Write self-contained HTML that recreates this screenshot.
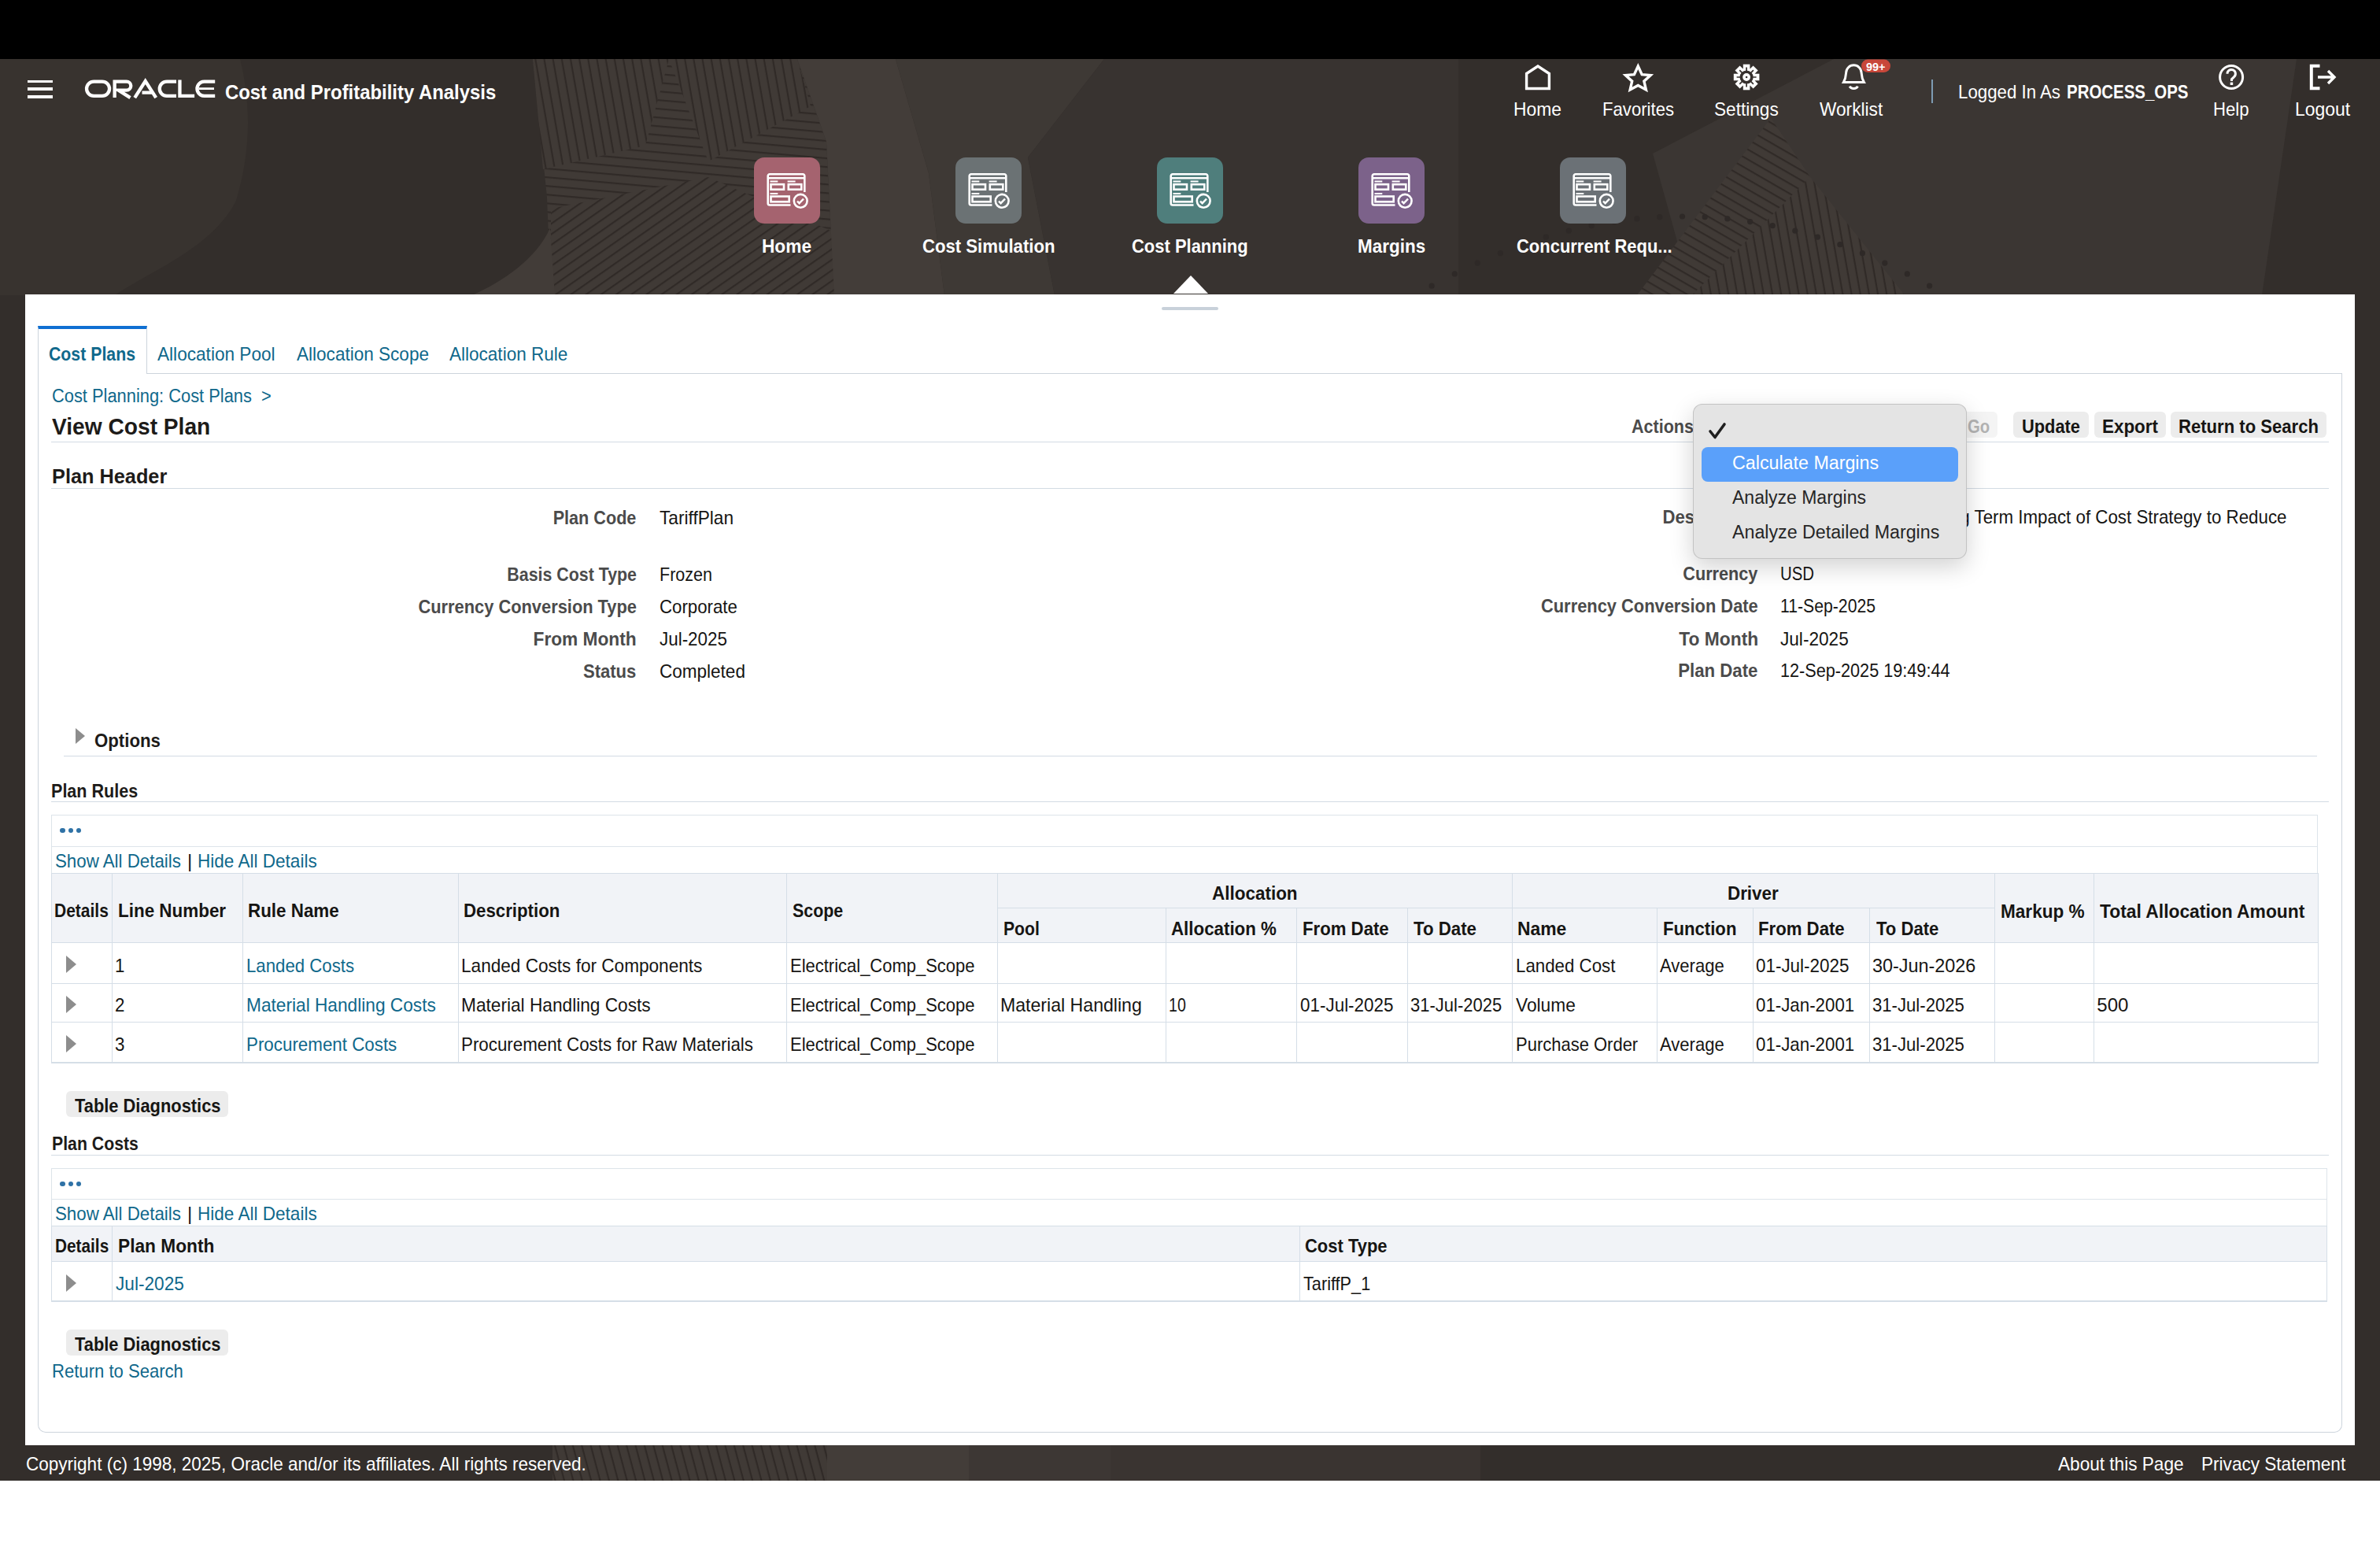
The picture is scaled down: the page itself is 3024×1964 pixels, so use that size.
<!DOCTYPE html><html><head><meta charset="utf-8"><style>
html,body{margin:0;padding:0;width:3024px;height:1964px;overflow:hidden;background:#fff;position:relative;font-family:"Liberation Sans",sans-serif;}
.t{position:absolute;white-space:pre;line-height:1;}

.tile{position:absolute;width:84px;height:84px;border-radius:13px;}
.tri{position:absolute;width:0;height:0;border-top:11px solid transparent;border-bottom:11px solid transparent;border-left:13px solid #8d8d8d;}
.btn{position:absolute;background:#ececec;border-radius:6px;}

</style></head><body>
<div style="position:absolute;left:0px;top:0px;width:3024px;height:75px;background:#000;"></div>
<div style="position:absolute;left:0px;top:75px;width:3024px;height:1806px;background:#332e2b;"></div>
<svg style="position:absolute;left:0;top:75px" width="3024" height="300" viewBox="0 0 3024 300">
<defs>
<pattern id="h1" width="11" height="11" patternUnits="userSpaceOnUse" patternTransform="rotate(80)"><rect width="11" height="11" fill="#403a36"/><rect width="11" height="2.2" fill="#302a27"/></pattern>
<pattern id="h2" width="11" height="11" patternUnits="userSpaceOnUse" patternTransform="rotate(5)"><rect width="11" height="11" fill="#403a36"/><rect width="11" height="2.2" fill="#302a27"/></pattern>
<pattern id="h3" width="11" height="11" patternUnits="userSpaceOnUse" patternTransform="rotate(-35)"><rect width="11" height="11" fill="#403a36"/><rect width="11" height="2.2" fill="#302a27"/></pattern>
<pattern id="h4" width="11" height="11" patternUnits="userSpaceOnUse" patternTransform="rotate(30)"><rect width="11" height="11" fill="#403a36"/><rect width="11" height="2.2" fill="#302a27"/></pattern>
</defs>
<path d="M677 0 L1013 0 L1050 105 L1060 300 L700 300 L695 175 Z" fill="url(#h2)"/>
<path d="M677 0 L850 0 L820 110 L690 140 Z" fill="url(#h1)"/>
<path d="M850 0 L1013 0 L1030 60 L900 130 Z" fill="url(#h1)"/>
<path d="M700 190 L900 150 L1060 220 L1060 300 L700 300 Z" fill="url(#h3)"/>
<path d="M0 0 L305 0 C320 60 318 120 300 180 C270 240 190 270 146 300 L0 300 Z" fill="#38332f"/>
<path d="M699 215 C680 255 640 282 600 300 L705 300 Z" fill="#423c38"/>

<path d="M1013 0 L1138 0 L1180 145 L1200 300 L1060 300 L1050 105 Z" fill="#433d39"/>
<path d="M1138 0 L1403 0 L1306 125 L1340 300 L1200 300 L1180 145 Z" fill="#3e3935"/>
<path d="M1403 0 L1853 0 L1853 300 L1340 300 L1306 125 Z" fill="#383330"/>
<path d="M2150 300 L2100 120 L2330 0 L2918 0 L2874 300 Z" fill="#3b3633"/>
<path d="M2080 300 L2250 75 L2300 150 L2150 300 Z" fill="url(#h4)"/>
<path d="M2150 300 L2300 150 L2420 300 Z" fill="url(#h1)"/>


<circle cx="1819.1" cy="288.2" r="3.6" fill="#2e2927"/>
<circle cx="1848.3" cy="272.9" r="3.6" fill="#2e2927"/>
<circle cx="1877.3" cy="259.1" r="3.6" fill="#2e2927"/>
<circle cx="1906.4" cy="246.7" r="3.6" fill="#2e2927"/>
<circle cx="1935.4" cy="235.7" r="3.6" fill="#2e2927"/>
<circle cx="1964.4" cy="226.2" r="3.6" fill="#2e2927"/>
<circle cx="1993.3" cy="218.2" r="3.6" fill="#2e2927"/>
<circle cx="2022.2" cy="211.7" r="3.6" fill="#2e2927"/>
<circle cx="2051.1" cy="206.6" r="3.6" fill="#2e2927"/>
<circle cx="2079.9" cy="202.9" r="3.6" fill="#2e2927"/>
<circle cx="2108.7" cy="200.7" r="3.6" fill="#2e2927"/>
<circle cx="2137.5" cy="200.0" r="3.6" fill="#2e2927"/>
<circle cx="2166.2" cy="200.7" r="3.6" fill="#2e2927"/>
<circle cx="2194.9" cy="202.9" r="3.6" fill="#2e2927"/>
<circle cx="2223.6" cy="206.6" r="3.6" fill="#2e2927"/>
<circle cx="2252.2" cy="211.7" r="3.6" fill="#2e2927"/>
<circle cx="2280.8" cy="218.2" r="3.6" fill="#2e2927"/>
<circle cx="2309.4" cy="226.2" r="3.6" fill="#2e2927"/>
<circle cx="2337.9" cy="235.7" r="3.6" fill="#2e2927"/>
<circle cx="2366.4" cy="246.7" r="3.6" fill="#2e2927"/>
<circle cx="2394.8" cy="259.1" r="3.6" fill="#2e2927"/>
<circle cx="2423.3" cy="272.9" r="3.6" fill="#2e2927"/>
<circle cx="2451.6" cy="288.2" r="3.6" fill="#2e2927"/>
</svg>
<div style="position:absolute;left:32px;top:374px;width:2960px;height:1462px;background:#fff;"></div>
<div style="position:absolute;left:48px;top:474px;width:2928px;height:1346px;border:1px solid #cdd4dc;border-top:none;border-radius:0 0 10px 10px;box-sizing:border-box;"></div>
<div style="position:absolute;left:186px;top:474px;width:2790px;height:1px;background:#cdd4dc;"></div>
<div style="position:absolute;left:48px;top:414px;width:139px;height:61px;border:1px solid #cdd4dc;border-top:4px solid #0f6fd2;border-bottom:none;box-sizing:border-box;background:#fff"></div>
<div style="position:absolute;left:35px;top:101.75px;width:32px;height:3.5px;background:#fff;"></div>
<div style="position:absolute;left:35px;top:111.25px;width:32px;height:3.5px;background:#fff;"></div>
<div style="position:absolute;left:35px;top:121.25px;width:32px;height:3.5px;background:#fff;"></div>
<svg style="position:absolute;left:0;top:0" width="300" height="140" viewBox="0 0 300 140">
<g fill="none" stroke="#fff" stroke-width="4.3">
<rect x="110.05" y="103.55" width="29" height="18.4" rx="9.2"/>
<path d="M145.65 124.1 V103.55 H160.75 a5.55 5.55 0 0 1 0 11.1 H150.5 L165.5 124.1"/>
<path d="M171.2 124.1 L184.7 103 L198.2 124.1 M180.5 117.6 H194"/>
<path d="M224 103.55 H211.95 a9.2 9.2 0 0 0 0 18.4 H224"/>
<path d="M228.45 101.4 V121.95 H247.1"/>
<path d="M273.2 103.55 H259.65 a9.2 9.2 0 0 0 0 18.4 H273.2"/>
<path d="M252.5 112.6 H272" stroke-width="2.8"/>
</g></svg>
<svg style="position:absolute;left:0;top:0" width="3024" height="200" viewBox="0 0 3024 200">
<g fill="none" stroke="#fff" stroke-width="3.4" stroke-linejoin="miter">
<path d="M1939.6 112.5 V93.5 L1954 84 L1968.4 93.5 V112.5 Z"/>
<path d="M2081.3 84 L2086.2 94.6 L2097.2 95.6 L2088.9 103.2 L2091.4 114 L2081.3 108.4 L2071.2 114 L2073.7 103.2 L2065.4 95.6 L2076.4 94.6 Z"/>
<circle cx="2835.1" cy="98" r="14.5" stroke-width="3"/>
<path d="M2947.5 83.8 H2936.8 V112.3 H2947.5" stroke-width="4"/>
<path d="M2945 98 H2966 M2958 90 L2966 98 L2958 106" stroke-width="3.4"/>
<path d="M2342.4 104.6 H2368.4 C2366.4 101 2365.4 97 2365.1 92.6 A9.75 9.75 0 0 0 2345.6 92.6 C2345.3 97 2344.4 101 2342.4 104.6 Z" stroke-width="3"/>
<path d="M2350.2 109.6 A5.5 4.6 0 0 0 2360.4 109.6" stroke-width="3"/>
<path d="M2830 93.8 A5.2 5.2 0 1 1 2838.6 97.6 L2835.5 100.6 V103" stroke-width="3"/>
</g>
<rect x="2833.7" y="104.6" width="3.5" height="3.4" fill="#fff"/>
<g transform="translate(2219.1,98)">
<g fill="#fff"><circle r="11.3"/><rect x="-4.3" y="-16.3" width="8.6" height="8" transform="rotate(0)"/><rect x="-4.3" y="-16.3" width="8.6" height="8" transform="rotate(45)"/><rect x="-4.3" y="-16.3" width="8.6" height="8" transform="rotate(90)"/><rect x="-4.3" y="-16.3" width="8.6" height="8" transform="rotate(135)"/><rect x="-4.3" y="-16.3" width="8.6" height="8" transform="rotate(180)"/><rect x="-4.3" y="-16.3" width="8.6" height="8" transform="rotate(225)"/><rect x="-4.3" y="-16.3" width="8.6" height="8" transform="rotate(270)"/><rect x="-4.3" y="-16.3" width="8.6" height="8" transform="rotate(315)"/></g>
<circle r="6.75" fill="none" stroke="#36302d" stroke-width="3.7"/>
<circle r="1.3" fill="#36302d"/>
<g stroke="#36302d" stroke-width="1.7">
<path d="M0 -8 V-12.5 M0 8 V12.5 M-8 0 H-12.5 M8 0 H12.5 M5.7 -5.7 L8.8 -8.8 M-5.7 -5.7 L-8.8 -8.8 M5.7 5.7 L8.8 8.8 M-5.7 5.7 L-8.8 8.8"/>
</g>
</g>
<rect x="2365" y="75.5" width="37" height="16.5" rx="8.2" fill="#c8473a"/>
<rect x="2454" y="101" width="2" height="30" fill="#7d9bb3"/>
</svg>
<div class="tile" style="left:958px;top:200px;background:#a5636f"><svg width="84" height="84" viewBox="0 0 84 84" style="position:absolute;left:0;top:0"><g fill="none" stroke="#fff" stroke-width="2.6">
<path d="M46.5 60.5 H20 a2.3 2.3 0 0 1 -2.3 -2.3 V23.5 a2.3 2.3 0 0 1 2.3 -2.3 H62 a2.3 2.3 0 0 1 2.3 2.3 V44"/>
<path d="M17.7 26.2 H64.3"/>
<rect x="21.5" y="34.2" width="16.5" height="6.5"/>
<rect x="43.8" y="34.2" width="16.5" height="6.5"/>
<rect x="21.5" y="49.5" width="23.2" height="6.8"/>
<circle cx="59.2" cy="55.3" r="8.4"/>
<path d="M55 55.6 L57.6 58.2 L63 52.6" stroke-width="2.4"/>
</g><g fill="#fff"><rect x="20.5" y="29.5" width="9.8" height="2"/><rect x="42.6" y="29.5" width="10" height="2"/><rect x="20.5" y="45" width="9.8" height="2"/></g></svg></div>
<div class="tile" style="left:1214px;top:200px;background:#6b7274"><svg width="84" height="84" viewBox="0 0 84 84" style="position:absolute;left:0;top:0"><g fill="none" stroke="#fff" stroke-width="2.6">
<path d="M46.5 60.5 H20 a2.3 2.3 0 0 1 -2.3 -2.3 V23.5 a2.3 2.3 0 0 1 2.3 -2.3 H62 a2.3 2.3 0 0 1 2.3 2.3 V44"/>
<path d="M17.7 26.2 H64.3"/>
<rect x="21.5" y="34.2" width="16.5" height="6.5"/>
<rect x="43.8" y="34.2" width="16.5" height="6.5"/>
<rect x="21.5" y="49.5" width="23.2" height="6.8"/>
<circle cx="59.2" cy="55.3" r="8.4"/>
<path d="M55 55.6 L57.6 58.2 L63 52.6" stroke-width="2.4"/>
</g><g fill="#fff"><rect x="20.5" y="29.5" width="9.8" height="2"/><rect x="42.6" y="29.5" width="10" height="2"/><rect x="20.5" y="45" width="9.8" height="2"/></g></svg></div>
<div class="tile" style="left:1470px;top:200px;background:#4f7e7c"><svg width="84" height="84" viewBox="0 0 84 84" style="position:absolute;left:0;top:0"><g fill="none" stroke="#fff" stroke-width="2.6">
<path d="M46.5 60.5 H20 a2.3 2.3 0 0 1 -2.3 -2.3 V23.5 a2.3 2.3 0 0 1 2.3 -2.3 H62 a2.3 2.3 0 0 1 2.3 2.3 V44"/>
<path d="M17.7 26.2 H64.3"/>
<rect x="21.5" y="34.2" width="16.5" height="6.5"/>
<rect x="43.8" y="34.2" width="16.5" height="6.5"/>
<rect x="21.5" y="49.5" width="23.2" height="6.8"/>
<circle cx="59.2" cy="55.3" r="8.4"/>
<path d="M55 55.6 L57.6 58.2 L63 52.6" stroke-width="2.4"/>
</g><g fill="#fff"><rect x="20.5" y="29.5" width="9.8" height="2"/><rect x="42.6" y="29.5" width="10" height="2"/><rect x="20.5" y="45" width="9.8" height="2"/></g></svg></div>
<div class="tile" style="left:1726px;top:200px;background:#7c628a"><svg width="84" height="84" viewBox="0 0 84 84" style="position:absolute;left:0;top:0"><g fill="none" stroke="#fff" stroke-width="2.6">
<path d="M46.5 60.5 H20 a2.3 2.3 0 0 1 -2.3 -2.3 V23.5 a2.3 2.3 0 0 1 2.3 -2.3 H62 a2.3 2.3 0 0 1 2.3 2.3 V44"/>
<path d="M17.7 26.2 H64.3"/>
<rect x="21.5" y="34.2" width="16.5" height="6.5"/>
<rect x="43.8" y="34.2" width="16.5" height="6.5"/>
<rect x="21.5" y="49.5" width="23.2" height="6.8"/>
<circle cx="59.2" cy="55.3" r="8.4"/>
<path d="M55 55.6 L57.6 58.2 L63 52.6" stroke-width="2.4"/>
</g><g fill="#fff"><rect x="20.5" y="29.5" width="9.8" height="2"/><rect x="42.6" y="29.5" width="10" height="2"/><rect x="20.5" y="45" width="9.8" height="2"/></g></svg></div>
<div class="tile" style="left:1982px;top:200px;background:#6b7176"><svg width="84" height="84" viewBox="0 0 84 84" style="position:absolute;left:0;top:0"><g fill="none" stroke="#fff" stroke-width="2.6">
<path d="M46.5 60.5 H20 a2.3 2.3 0 0 1 -2.3 -2.3 V23.5 a2.3 2.3 0 0 1 2.3 -2.3 H62 a2.3 2.3 0 0 1 2.3 2.3 V44"/>
<path d="M17.7 26.2 H64.3"/>
<rect x="21.5" y="34.2" width="16.5" height="6.5"/>
<rect x="43.8" y="34.2" width="16.5" height="6.5"/>
<rect x="21.5" y="49.5" width="23.2" height="6.8"/>
<circle cx="59.2" cy="55.3" r="8.4"/>
<path d="M55 55.6 L57.6 58.2 L63 52.6" stroke-width="2.4"/>
</g><g fill="#fff"><rect x="20.5" y="29.5" width="9.8" height="2"/><rect x="42.6" y="29.5" width="10" height="2"/><rect x="20.5" y="45" width="9.8" height="2"/></g></svg></div>
<div style="position:absolute;left:1491px;top:350px;width:0;height:0;border-left:22px solid transparent;border-right:22px solid transparent;border-bottom:23px solid #fff"></div>
<div style="position:absolute;left:1476px;top:390px;width:72px;height:4px;background:#c8d1da;border-radius:2px;"></div>
<div style="position:absolute;left:65px;top:561px;width:2894px;height:1px;background:#d3dbe3;"></div>
<div style="position:absolute;left:65px;top:620px;width:2894px;height:1px;background:#d3dbe3;"></div>
<div class="btn" style="left:2476px;top:523px;width:62px;height:33px;background:#f4f4f4"></div>
<div class="btn" style="left:2558px;top:523px;width:96px;height:33px"></div>
<div class="btn" style="left:2661px;top:523px;width:90.69999999999982px;height:33px"></div>
<div class="btn" style="left:2758px;top:523px;width:198px;height:33px"></div>
<div class="tri" style="left:96px;top:924.5px;border-top-width:10.7px;border-bottom-width:10.7px;border-left-width:12.5px"></div>
<div style="position:absolute;left:81px;top:960px;width:2863px;height:1px;background:#d3dbe3;"></div>
<div style="position:absolute;left:65px;top:1018px;width:2894px;height:1px;background:#d3dbe3;"></div>
<div style="position:absolute;left:65px;top:1035px;width:2880px;height:75px;border:1px solid #dde4ea;border-bottom:none;box-sizing:border-box"></div>
<div style="position:absolute;left:65px;top:1075px;width:2879px;height:1px;background:#dde4ea;"></div>
<div style="position:absolute;left:76.3px;top:1051.8px;width:6.4px;height:6.4px;border-radius:50%;background:#2f72a6"></div>
<div style="position:absolute;left:86.6px;top:1051.8px;width:6.4px;height:6.4px;border-radius:50%;background:#2f72a6"></div>
<div style="position:absolute;left:96.8px;top:1051.8px;width:6.4px;height:6.4px;border-radius:50%;background:#2f72a6"></div>
<div style="position:absolute;left:65.2px;top:1109.4px;width:2880.1000000000004px;height:88.09999999999991px;background:#f1f3f7;"></div>
<div style="position:absolute;left:65px;top:1109px;width:2881px;height:1px;background:#d5dee7;"></div>
<div style="position:absolute;left:65px;top:1197px;width:2881px;height:1px;background:#d5dee7;"></div>
<div style="position:absolute;left:65px;top:1249px;width:2881px;height:1px;background:#d5dee7;"></div>
<div style="position:absolute;left:65px;top:1298px;width:2881px;height:1px;background:#d5dee7;"></div>
<div style="position:absolute;left:65px;top:1349px;width:2881px;height:2px;background:#d5dee7;"></div>
<div style="position:absolute;left:1267px;top:1153px;width:1268px;height:1px;background:#d5dee7;"></div>
<div style="position:absolute;left:65px;top:1109px;width:1px;height:241px;background:#d5dee7;"></div>
<div style="position:absolute;left:142px;top:1109px;width:1px;height:241px;background:#d5dee7;"></div>
<div style="position:absolute;left:308px;top:1109px;width:1px;height:241px;background:#d5dee7;"></div>
<div style="position:absolute;left:582px;top:1109px;width:1px;height:241px;background:#d5dee7;"></div>
<div style="position:absolute;left:999px;top:1109px;width:1px;height:241px;background:#d5dee7;"></div>
<div style="position:absolute;left:1267px;top:1109px;width:1px;height:241px;background:#d5dee7;"></div>
<div style="position:absolute;left:1481px;top:1153px;width:1px;height:197px;background:#d5dee7;"></div>
<div style="position:absolute;left:1647px;top:1153px;width:1px;height:197px;background:#d5dee7;"></div>
<div style="position:absolute;left:1788px;top:1153px;width:1px;height:197px;background:#d5dee7;"></div>
<div style="position:absolute;left:1921px;top:1109px;width:1px;height:241px;background:#d5dee7;"></div>
<div style="position:absolute;left:2105px;top:1153px;width:1px;height:197px;background:#d5dee7;"></div>
<div style="position:absolute;left:2227px;top:1153px;width:1px;height:197px;background:#d5dee7;"></div>
<div style="position:absolute;left:2375px;top:1153px;width:1px;height:197px;background:#d5dee7;"></div>
<div style="position:absolute;left:2534px;top:1109px;width:1px;height:241px;background:#d5dee7;"></div>
<div style="position:absolute;left:2660px;top:1109px;width:1px;height:241px;background:#d5dee7;"></div>
<div style="position:absolute;left:2945px;top:1109px;width:1px;height:241px;background:#d5dee7;"></div>
<div class="tri" style="left:84px;top:1213.9px"></div>
<div class="tri" style="left:84px;top:1264.5px"></div>
<div class="tri" style="left:84px;top:1314.5px"></div>
<div class="btn" style="left:84px;top:1386px;width:206px;height:33px"></div>
<div style="position:absolute;left:65px;top:1467px;width:2894px;height:1px;background:#d3dbe3;"></div>
<div style="position:absolute;left:65px;top:1484px;width:2892px;height:74px;border:1px solid #dde4ea;border-bottom:none;box-sizing:border-box"></div>
<div style="position:absolute;left:65px;top:1523px;width:2892px;height:1px;background:#dde4ea;"></div>
<div style="position:absolute;left:76.3px;top:1500.5px;width:6.4px;height:6.4px;border-radius:50%;background:#2f72a6"></div>
<div style="position:absolute;left:86.6px;top:1500.5px;width:6.4px;height:6.4px;border-radius:50%;background:#2f72a6"></div>
<div style="position:absolute;left:96.8px;top:1500.5px;width:6.4px;height:6.4px;border-radius:50%;background:#2f72a6"></div>
<div style="position:absolute;left:65.2px;top:1557.8px;width:2891.5px;height:44.700000000000045px;background:#f1f3f7;"></div>
<div style="position:absolute;left:65px;top:1557px;width:2892px;height:1px;background:#d5dee7;"></div>
<div style="position:absolute;left:65px;top:1602px;width:2892px;height:1px;background:#d5dee7;"></div>
<div style="position:absolute;left:65px;top:1652px;width:2892px;height:2px;background:#d5dee7;"></div>
<div style="position:absolute;left:65px;top:1557px;width:1px;height:96px;background:#d5dee7;"></div>
<div style="position:absolute;left:142px;top:1557px;width:1px;height:96px;background:#d5dee7;"></div>
<div style="position:absolute;left:1651px;top:1557px;width:1px;height:96px;background:#d5dee7;"></div>
<div style="position:absolute;left:2956px;top:1557px;width:1px;height:96px;background:#d5dee7;"></div>
<div class="tri" style="left:84px;top:1618.5px"></div>
<div class="btn" style="left:84px;top:1689px;width:206px;height:33px"></div>
<svg style="position:absolute;left:0;top:1836px" width="3024" height="45" viewBox="0 0 3024 45">
<defs><pattern id="f1" width="11" height="11" patternUnits="userSpaceOnUse" patternTransform="rotate(75)"><rect width="11" height="11" fill="#403a36"/><rect width="11" height="2.2" fill="#302a27"/></pattern></defs>
<rect x="702" y="0" width="350" height="45" fill="url(#f1)"/>
<rect x="1051" y="0" width="180" height="45" fill="#433d39"/>
<rect x="1231" y="0" width="180" height="45" fill="#3d3734"/>
<rect x="1411" y="0" width="470" height="45" fill="#3a3431"/>
</svg>
<div style="position:absolute;left:0px;top:1881px;width:3024px;height:83px;background:#fff;"></div>
<span class="t" id="t0" style="left:285.60px;top:103.80px;font-size:26px;font-weight:700;color:#ffffff;transform:scaleX(0.9187);transform-origin:left;">Cost and Profitability Analysis</span>
<span class="t" id="t1" style="left:2371.00px;top:76.55px;font-size:15px;font-weight:700;color:#ffffff;transform:scaleX(0.9626);transform-origin:left;">99+</span>
<span class="t" id="t2" style="left:1923.00px;top:127.00px;font-size:24px;color:#ffffff;transform:scaleX(0.9527);transform-origin:left;">Home</span>
<span class="t" id="t3" style="left:2036.00px;top:127.00px;font-size:24px;color:#ffffff;transform:scaleX(0.9220);transform-origin:left;">Favorites</span>
<span class="t" id="t4" style="left:2178.00px;top:127.00px;font-size:24px;color:#ffffff;transform:scaleX(0.9421);transform-origin:left;">Settings</span>
<span class="t" id="t5" style="left:2311.80px;top:127.00px;font-size:24px;color:#ffffff;transform:scaleX(0.9447);transform-origin:left;">Worklist</span>
<span class="t" id="t6" style="left:2812.00px;top:126.80px;font-size:24px;color:#ffffff;transform:scaleX(0.9218);transform-origin:left;">Help</span>
<span class="t" id="t7" style="left:2916.40px;top:126.80px;font-size:24px;color:#ffffff;transform:scaleX(0.9563);transform-origin:left;">Logout</span>
<span class="t" id="t8" style="left:2488.00px;top:104.70px;font-size:24px;color:#ffffff;transform:scaleX(0.9277);transform-origin:left;">Logged In As</span>
<span class="t" id="t9" style="left:2626.00px;top:104.70px;font-size:24px;font-weight:700;color:#ffffff;transform:scaleX(0.8517);transform-origin:left;">PROCESS_OPS</span>
<span class="t" id="t10" style="left:968.00px;top:300.60px;font-size:24px;font-weight:700;color:#ffffff;transform:scaleX(0.9447);transform-origin:left;">Home</span>
<span class="t" id="t11" style="left:1171.50px;top:300.60px;font-size:24px;font-weight:700;color:#ffffff;transform:scaleX(0.9224);transform-origin:left;">Cost Simulation</span>
<span class="t" id="t12" style="left:1438.00px;top:300.60px;font-size:24px;font-weight:700;color:#ffffff;transform:scaleX(0.9148);transform-origin:left;">Cost Planning</span>
<span class="t" id="t13" style="left:1724.80px;top:300.60px;font-size:24px;font-weight:700;color:#ffffff;transform:scaleX(0.9368);transform-origin:left;">Margins</span>
<span class="t" id="t14" style="left:1927.00px;top:300.60px;font-size:24px;font-weight:700;color:#ffffff;transform:scaleX(0.9147);transform-origin:left;">Concurrent Requ...</span>
<span class="t" id="t15" style="left:62.00px;top:438.30px;font-size:24px;font-weight:700;color:#0f688b;transform:scaleX(0.8869);transform-origin:left;">Cost Plans</span>
<span class="t" id="t16" style="left:200.00px;top:438.30px;font-size:24px;color:#0f688b;transform:scaleX(0.9423);transform-origin:left;">Allocation Pool</span>
<span class="t" id="t17" style="left:376.50px;top:438.30px;font-size:24px;color:#0f688b;transform:scaleX(0.9397);transform-origin:left;">Allocation Scope</span>
<span class="t" id="t18" style="left:570.70px;top:438.30px;font-size:24px;color:#0f688b;transform:scaleX(0.9388);transform-origin:left;">Allocation Rule</span>
<span class="t" id="t19" style="left:66.10px;top:491.75px;font-size:23px;color:#0f688b;transform:scaleX(0.9502);transform-origin:left;">Cost Planning: Cost Plans  &gt;</span>
<span class="t" id="t20" style="left:65.70px;top:527.30px;font-size:30px;font-weight:700;color:#1d1b19;transform:scaleX(0.9384);transform-origin:left;">View Cost Plan</span>
<span class="t" id="t21" style="left:66.30px;top:591.60px;font-size:26px;font-weight:700;color:#1d1b19;transform:scaleX(0.9734);transform-origin:left;">Plan Header</span>
<span class="t" id="t22" style="right:872.00px;top:529.80px;font-size:24px;font-weight:700;color:#4b4b4b;transform:scaleX(0.8976);transform-origin:right;">Actions</span>
<span class="t" id="t23" style="left:2500.00px;top:529.80px;font-size:24px;font-weight:700;color:#b3b3b3;transform:scaleX(0.8461);transform-origin:left;">Go</span>
<span class="t" id="t24" style="left:2569.00px;top:529.80px;font-size:24px;font-weight:700;color:#161513;transform:scaleX(0.9097);transform-origin:left;">Update</span>
<span class="t" id="t25" style="left:2671.00px;top:529.80px;font-size:24px;font-weight:700;color:#161513;transform:scaleX(0.9340);transform-origin:left;">Export</span>
<span class="t" id="t26" style="left:2768.00px;top:529.80px;font-size:24px;font-weight:700;color:#161513;transform:scaleX(0.9205);transform-origin:left;">Return to Search</span>
<span class="t" id="t27" style="right:2215.50px;top:645.80px;font-size:24px;font-weight:700;color:#4b4b4b;transform:scaleX(0.9007);transform-origin:right;">Plan Code</span>
<span class="t" id="t28" style="left:837.50px;top:645.80px;font-size:24px;color:#161513;transform:scaleX(0.9437);transform-origin:left;">TariffPlan</span>
<span class="t" id="t29" style="right:2215.50px;top:717.60px;font-size:24px;font-weight:700;color:#4b4b4b;transform:scaleX(0.8900);transform-origin:right;">Basis Cost Type</span>
<span class="t" id="t30" style="left:837.50px;top:717.60px;font-size:24px;color:#161513;transform:scaleX(0.8969);transform-origin:left;">Frozen</span>
<span class="t" id="t31" style="right:2215.50px;top:758.80px;font-size:24px;font-weight:700;color:#4b4b4b;transform:scaleX(0.9099);transform-origin:right;">Currency Conversion Type</span>
<span class="t" id="t32" style="left:837.50px;top:758.80px;font-size:24px;color:#161513;transform:scaleX(0.9257);transform-origin:left;">Corporate</span>
<span class="t" id="t33" style="right:2215.50px;top:799.50px;font-size:24px;font-weight:700;color:#4b4b4b;transform:scaleX(0.9456);transform-origin:right;">From Month</span>
<span class="t" id="t34" style="left:837.50px;top:799.50px;font-size:24px;color:#161513;transform:scaleX(0.9331);transform-origin:left;">Jul-2025</span>
<span class="t" id="t35" style="right:2215.50px;top:840.70px;font-size:24px;font-weight:700;color:#4b4b4b;transform:scaleX(0.9188);transform-origin:right;">Status</span>
<span class="t" id="t36" style="left:837.50px;top:840.70px;font-size:24px;color:#161513;transform:scaleX(0.9383);transform-origin:left;">Completed</span>
<span class="t" id="t37" style="right:790.20px;top:717.30px;font-size:24px;font-weight:700;color:#4b4b4b;transform:scaleX(0.9025);transform-origin:right;">Currency</span>
<span class="t" id="t38" style="left:2262.00px;top:717.30px;font-size:24px;color:#161513;transform:scaleX(0.8486);transform-origin:left;">USD</span>
<span class="t" id="t39" style="right:790.20px;top:758.30px;font-size:24px;font-weight:700;color:#4b4b4b;transform:scaleX(0.9109);transform-origin:right;">Currency Conversion Date</span>
<span class="t" id="t40" style="left:2262.00px;top:758.30px;font-size:24px;color:#161513;transform:scaleX(0.8832);transform-origin:left;">11-Sep-2025</span>
<span class="t" id="t41" style="right:790.20px;top:799.80px;font-size:24px;font-weight:700;color:#4b4b4b;transform:scaleX(0.9494);transform-origin:right;">To Month</span>
<span class="t" id="t42" style="left:2262.00px;top:799.80px;font-size:24px;color:#161513;transform:scaleX(0.9418);transform-origin:left;">Jul-2025</span>
<span class="t" id="t43" style="right:790.20px;top:840.00px;font-size:24px;font-weight:700;color:#4b4b4b;transform:scaleX(0.9253);transform-origin:right;">Plan Date</span>
<span class="t" id="t44" style="left:2262.00px;top:840.00px;font-size:24px;color:#161513;transform:scaleX(0.9021);transform-origin:left;">12-Sep-2025 19:49:44</span>
<span class="t" id="t45" style="right:790.20px;top:645.30px;font-size:24px;font-weight:700;color:#4b4b4b;transform:scaleX(0.9202);transform-origin:right;">Description</span>
<span class="t" id="t46" style="right:118.20px;top:645.30px;font-size:24px;color:#161513;transform:scaleX(0.9300);transform-origin:right;">Long Term Impact of Cost Strategy to Reduce</span>
<span class="t" id="t47" style="left:120.00px;top:929.30px;font-size:24px;font-weight:700;color:#1d1b19;transform:scaleX(0.9255);transform-origin:left;">Options</span>
<span class="t" id="t48" style="left:65.20px;top:992.50px;font-size:24px;font-weight:700;color:#1d1b19;transform:scaleX(0.8980);transform-origin:left;">Plan Rules</span>
<span class="t" id="t49" style="left:69.70px;top:1081.50px;font-size:24px;color:#0f688b;transform:scaleX(0.9292);transform-origin:left;">Show All Details</span>
<span class="t" id="t50" style="left:238.00px;top:1081.50px;font-size:24px;color:#161513;">|</span>
<span class="t" id="t51" style="left:250.50px;top:1081.50px;font-size:24px;color:#0f688b;transform:scaleX(0.9399);transform-origin:left;">Hide All Details</span>
<span class="t" id="t52" style="left:69.40px;top:1145.30px;font-size:24px;font-weight:700;color:#161513;transform:scaleX(0.8742);transform-origin:left;">Details</span>
<span class="t" id="t53" style="left:149.60px;top:1145.30px;font-size:24px;font-weight:700;color:#161513;transform:scaleX(0.9346);transform-origin:left;">Line Number</span>
<span class="t" id="t54" style="left:315.30px;top:1145.30px;font-size:24px;font-weight:700;color:#161513;transform:scaleX(0.9327);transform-origin:left;">Rule Name</span>
<span class="t" id="t55" style="left:589.00px;top:1145.30px;font-size:24px;font-weight:700;color:#161513;transform:scaleX(0.9271);transform-origin:left;">Description</span>
<span class="t" id="t56" style="left:1006.80px;top:1145.30px;font-size:24px;font-weight:700;color:#161513;transform:scaleX(0.8913);transform-origin:left;">Scope</span>
<span class="t" id="t57" style="left:1539.60px;top:1123.00px;font-size:24px;font-weight:700;color:#161513;transform:scaleX(0.9361);transform-origin:left;">Allocation</span>
<span class="t" id="t58" style="left:2195.30px;top:1123.00px;font-size:24px;font-weight:700;color:#161513;transform:scaleX(0.9326);transform-origin:left;">Driver</span>
<span class="t" id="t59" style="left:1274.60px;top:1168.00px;font-size:24px;font-weight:700;color:#161513;transform:scaleX(0.8808);transform-origin:left;">Pool</span>
<span class="t" id="t60" style="left:1488.30px;top:1168.00px;font-size:24px;font-weight:700;color:#161513;transform:scaleX(0.9298);transform-origin:left;">Allocation %</span>
<span class="t" id="t61" style="left:1655.00px;top:1168.00px;font-size:24px;font-weight:700;color:#161513;transform:scaleX(0.9243);transform-origin:left;">From Date</span>
<span class="t" id="t62" style="left:1796.00px;top:1168.00px;font-size:24px;font-weight:700;color:#161513;transform:scaleX(0.9277);transform-origin:left;">To Date</span>
<span class="t" id="t63" style="left:1928.30px;top:1168.00px;font-size:24px;font-weight:700;color:#161513;transform:scaleX(0.9530);transform-origin:left;">Name</span>
<span class="t" id="t64" style="left:2112.50px;top:1168.00px;font-size:24px;font-weight:700;color:#161513;transform:scaleX(0.9219);transform-origin:left;">Function</span>
<span class="t" id="t65" style="left:2234.30px;top:1168.00px;font-size:24px;font-weight:700;color:#161513;transform:scaleX(0.9243);transform-origin:left;">From Date</span>
<span class="t" id="t66" style="left:2383.70px;top:1168.00px;font-size:24px;font-weight:700;color:#161513;transform:scaleX(0.9196);transform-origin:left;">To Date</span>
<span class="t" id="t67" style="left:2541.80px;top:1145.70px;font-size:24px;font-weight:700;color:#161513;transform:scaleX(0.9404);transform-origin:left;">Markup %</span>
<span class="t" id="t68" style="left:2668.00px;top:1145.70px;font-size:24px;font-weight:700;color:#161513;transform:scaleX(0.9509);transform-origin:left;">Total Allocation Amount</span>
<span class="t" id="t69" style="left:146.00px;top:1214.70px;font-size:24px;color:#161513;transform:scaleX(0.9300);transform-origin:left;">1</span>
<span class="t" id="t70" style="left:146.00px;top:1265.30px;font-size:24px;color:#161513;transform:scaleX(0.9300);transform-origin:left;">2</span>
<span class="t" id="t71" style="left:146.00px;top:1315.30px;font-size:24px;color:#161513;transform:scaleX(0.9300);transform-origin:left;">3</span>
<span class="t" id="t72" style="left:312.70px;top:1214.70px;font-size:24px;color:#0f688b;transform:scaleX(0.9257);transform-origin:left;">Landed Costs</span>
<span class="t" id="t73" style="left:312.70px;top:1265.30px;font-size:24px;color:#0f688b;transform:scaleX(0.9451);transform-origin:left;">Material Handling Costs</span>
<span class="t" id="t74" style="left:312.70px;top:1315.30px;font-size:24px;color:#0f688b;transform:scaleX(0.9313);transform-origin:left;">Procurement Costs</span>
<span class="t" id="t75" style="left:586.30px;top:1214.70px;font-size:24px;color:#161513;transform:scaleX(0.9412);transform-origin:left;">Landed Costs for Components</span>
<span class="t" id="t76" style="left:586.30px;top:1265.30px;font-size:24px;color:#161513;transform:scaleX(0.9447);transform-origin:left;">Material Handling Costs</span>
<span class="t" id="t77" style="left:586.30px;top:1315.30px;font-size:24px;color:#161513;transform:scaleX(0.9303);transform-origin:left;">Procurement Costs for Raw Materials</span>
<span class="t" id="t78" style="left:1004.20px;top:1214.70px;font-size:24px;color:#161513;transform:scaleX(0.9156);transform-origin:left;">Electrical_Comp_Scope</span>
<span class="t" id="t79" style="left:1004.20px;top:1265.30px;font-size:24px;color:#161513;transform:scaleX(0.9156);transform-origin:left;">Electrical_Comp_Scope</span>
<span class="t" id="t80" style="left:1004.20px;top:1315.30px;font-size:24px;color:#161513;transform:scaleX(0.9156);transform-origin:left;">Electrical_Comp_Scope</span>
<span class="t" id="t81" style="left:1925.50px;top:1214.70px;font-size:24px;color:#161513;transform:scaleX(0.9287);transform-origin:left;">Landed Cost</span>
<span class="t" id="t82" style="left:2109.00px;top:1214.70px;font-size:24px;color:#161513;transform:scaleX(0.9194);transform-origin:left;">Average</span>
<span class="t" id="t83" style="left:2231.20px;top:1214.70px;font-size:24px;color:#161513;transform:scaleX(0.9341);transform-origin:left;">01-Jul-2025</span>
<span class="t" id="t84" style="left:2379.10px;top:1214.70px;font-size:24px;color:#161513;transform:scaleX(0.9743);transform-origin:left;">30-Jun-2026</span>
<span class="t" id="t85" style="left:1271.00px;top:1265.30px;font-size:24px;color:#161513;transform:scaleX(0.9627);transform-origin:left;">Material Handling</span>
<span class="t" id="t86" style="left:1485.00px;top:1265.30px;font-size:24px;color:#161513;transform:scaleX(0.8164);transform-origin:left;">10</span>
<span class="t" id="t87" style="left:1651.80px;top:1265.30px;font-size:24px;color:#161513;transform:scaleX(0.9349);transform-origin:left;">01-Jul-2025</span>
<span class="t" id="t88" style="left:1792.40px;top:1265.30px;font-size:24px;color:#161513;transform:scaleX(0.9160);transform-origin:left;">31-Jul-2025</span>
<span class="t" id="t89" style="left:1925.50px;top:1265.30px;font-size:24px;color:#161513;transform:scaleX(0.9468);transform-origin:left;">Volume</span>
<span class="t" id="t90" style="left:2231.20px;top:1265.30px;font-size:24px;color:#161513;transform:scaleX(0.9290);transform-origin:left;">01-Jan-2001</span>
<span class="t" id="t91" style="left:2379.10px;top:1265.30px;font-size:24px;color:#161513;transform:scaleX(0.9223);transform-origin:left;">31-Jul-2025</span>
<span class="t" id="t92" style="left:2664.30px;top:1265.30px;font-size:24px;color:#161513;">500</span>
<span class="t" id="t93" style="left:1925.50px;top:1315.30px;font-size:24px;color:#161513;transform:scaleX(0.9161);transform-origin:left;">Purchase Order</span>
<span class="t" id="t94" style="left:2109.00px;top:1315.30px;font-size:24px;color:#161513;transform:scaleX(0.9194);transform-origin:left;">Average</span>
<span class="t" id="t95" style="left:2231.20px;top:1315.30px;font-size:24px;color:#161513;transform:scaleX(0.9290);transform-origin:left;">01-Jan-2001</span>
<span class="t" id="t96" style="left:2379.10px;top:1315.30px;font-size:24px;color:#161513;transform:scaleX(0.9223);transform-origin:left;">31-Jul-2025</span>
<span class="t" id="t97" style="left:95.00px;top:1393.00px;font-size:24px;font-weight:700;color:#161513;transform:scaleX(0.9111);transform-origin:left;">Table Diagnostics</span>
<span class="t" id="t98" style="left:65.60px;top:1440.50px;font-size:24px;font-weight:700;color:#1d1b19;transform:scaleX(0.8861);transform-origin:left;">Plan Costs</span>
<span class="t" id="t99" style="left:69.70px;top:1529.60px;font-size:24px;color:#0f688b;transform:scaleX(0.9292);transform-origin:left;">Show All Details</span>
<span class="t" id="t100" style="left:238.00px;top:1529.60px;font-size:24px;color:#161513;">|</span>
<span class="t" id="t101" style="left:250.50px;top:1529.60px;font-size:24px;color:#0f688b;transform:scaleX(0.9399);transform-origin:left;">Hide All Details</span>
<span class="t" id="t102" style="left:70.00px;top:1571.30px;font-size:24px;font-weight:700;color:#161513;transform:scaleX(0.8665);transform-origin:left;">Details</span>
<span class="t" id="t103" style="left:149.60px;top:1571.30px;font-size:24px;font-weight:700;color:#161513;transform:scaleX(0.9464);transform-origin:left;">Plan Month</span>
<span class="t" id="t104" style="left:1658.00px;top:1571.30px;font-size:24px;font-weight:700;color:#161513;transform:scaleX(0.9148);transform-origin:left;">Cost Type</span>
<span class="t" id="t105" style="left:146.70px;top:1619.30px;font-size:24px;color:#0f688b;transform:scaleX(0.9428);transform-origin:left;">Jul-2025</span>
<span class="t" id="t106" style="left:1655.60px;top:1619.30px;font-size:24px;color:#161513;transform:scaleX(0.9037);transform-origin:left;">TariffP_1</span>
<span class="t" id="t107" style="left:95.00px;top:1696.10px;font-size:24px;font-weight:700;color:#161513;transform:scaleX(0.9111);transform-origin:left;">Table Diagnostics</span>
<span class="t" id="t108" style="left:65.60px;top:1729.60px;font-size:24px;color:#0f688b;transform:scaleX(0.9199);transform-origin:left;">Return to Search</span>
<span class="t" id="t109" style="left:32.60px;top:1848.30px;font-size:24px;color:#ffffff;transform:scaleX(0.9384);transform-origin:left;">Copyright (c) 1998, 2025, Oracle and/or its affiliates. All rights reserved.</span>
<span class="t" id="t110" style="left:2614.80px;top:1848.20px;font-size:24px;color:#ffffff;transform:scaleX(0.9413);transform-origin:left;">About this Page</span>
<span class="t" id="t111" style="left:2797.30px;top:1848.20px;font-size:24px;color:#ffffff;transform:scaleX(0.9407);transform-origin:left;">Privacy Statement</span>
<span class="t" id="t112" style="left:2200.90px;top:577.35px;font-size:23px;color:#ffffff;transform:scaleX(1.0109);transform-origin:left;z-index:20;">Calculate Margins</span>
<span class="t" id="t113" style="left:2201.00px;top:621.15px;font-size:23px;color:#262626;z-index:20;">Analyze Margins</span>
<span class="t" id="t114" style="left:2201.00px;top:665.15px;font-size:23px;color:#262626;transform:scaleX(1.0096);transform-origin:left;z-index:20;">Analyze Detailed Margins</span>
<div style="position:absolute;left:2150.5px;top:513px;width:348px;height:197px;border-radius:12px;background:#e4e4e4;z-index:10;border:1px solid rgba(0,0,0,0.14);box-sizing:border-box;box-shadow:0 10px 30px rgba(0,0,0,0.18)"></div>
<div style="position:absolute;left:2162px;top:568px;width:326px;height:44px;border-radius:8px;background:#5aa0fa;z-index:11"></div>
<svg style="position:absolute;left:2170px;top:536px;z-index:12" width="24" height="24" viewBox="0 0 24 24"><path d="M3 12 L9 19.5 L21 3" fill="none" stroke="#1f1f1f" stroke-width="3.6" stroke-linecap="round" stroke-linejoin="round"/></svg>
</body></html>
